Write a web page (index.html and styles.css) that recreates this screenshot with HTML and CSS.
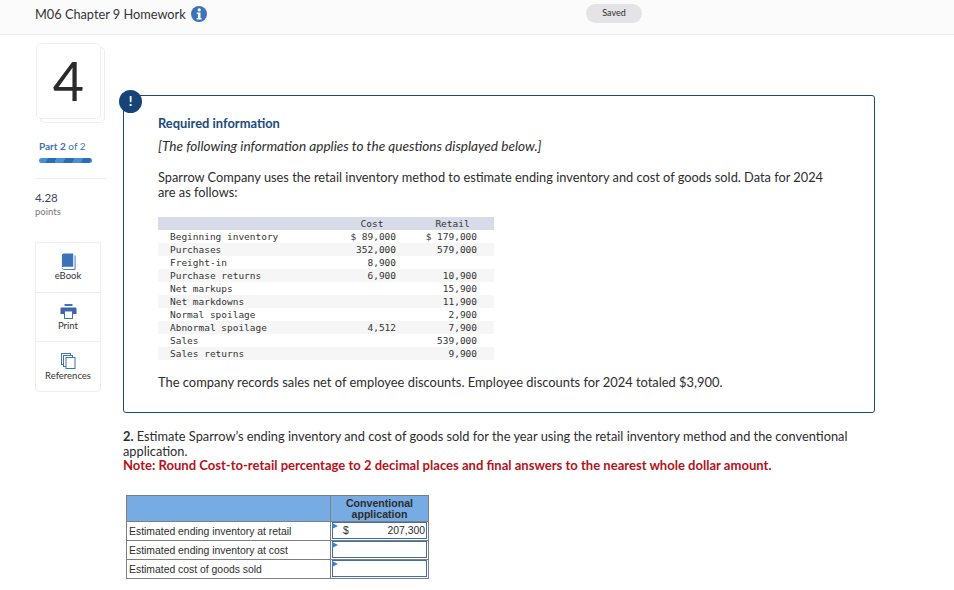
FILE: index.html
```html
<!DOCTYPE html>
<html lang="en">
<head>
<meta charset="utf-8">
<title>M06 Chapter 9 Homework</title>
<link rel="stylesheet" href="styles.css">
</head>
<body>
<header class="topbar">
  <div class="title"><span>M06 Chapter 9 Homework</span>
    <svg class="info" viewBox="0 0 16 16" width="16" height="16"><circle cx="8" cy="8" r="8" fill="#3b73b9"/><circle cx="8.200" cy="3.900" r="1.600" fill="#fff"/><path d="M5.800 6.400h3.700v5.600h1.100v1.600H5.700V12h1.200V8H5.800z" fill="#fff"/></svg>
  </div>
  <div class="saved">Saved</div>
</header>
<main class="layout">
  <aside class="side">
    <div class="qcard"><div class="qnum">4</div></div>
    <div class="part"><b>Part 2</b> of 2</div>
    <div class="progress"></div>
    <div class="rule"></div>
    <div class="score">4.28</div>
    <div class="pts">points</div>
    <div class="tools">
      <div class="tool">
        <svg viewBox="0 0 16 18" width="15" height="17"><path d="M1 2.500A2 2 0 0 1 3 .5h10v14H3a2 2 0 0 0-2 1.500z" fill="#3b73b9"/><path d="M1.500 16c0 .9.8 1.500 1.600 1.500H15V2.500" fill="none" stroke="#3b73b9"/></svg>
        <span>eBook</span>
      </div>
      <div class="tool">
        <svg viewBox="0 0 17 15" width="17" height="15"><rect x="4.500" y="0" width="8" height="2" fill="#3b73b9"/><path d="M1.500 3.500h14a1 1 0 0 1 1 1V10h-16V4.500a1 1 0 0 1 1-1z" fill="#3f62a8"/><rect x="4.500" y="7" width="8" height="7.500" fill="#fff" stroke="#3b73b9"/></svg>
        <span>Print</span>
      </div>
      <div class="tool">
        <svg viewBox="0 0 15 16" width="15" height="16"><g fill="#fff" stroke="#3b73b9"><rect x=".5" y=".5" width="9" height="11"/><rect x="2.500" y="2.500" width="9" height="11"/><rect x="5" y="4.500" width="9" height="11"/></g></svg>
        <span>References</span>
      </div>
    </div>
  </aside>
  <section class="content">
    <div class="callout">
      <div class="badge">!</div>
      <h2 class="req">Required information</h2>
      <p class="note">[The following information applies to the questions displayed below.]</p>
      <p class="intro">Sparrow Company uses the retail inventory method to estimate ending inventory and cost of goods sold. Data for 2024 are as follows:</p>
      <table class="data">
        <tr class="hd"><td></td><td class="c">Cost</td><td class="c">Retail</td></tr>
        <tr><td>Beginning inventory</td><td class="n">$ 89,000</td><td class="n">$ 179,000</td></tr>
        <tr class="alt"><td>Purchases</td><td class="n">352,000</td><td class="n">579,000</td></tr>
        <tr><td>Freight-in</td><td class="n">8,900</td><td class="n"></td></tr>
        <tr class="alt"><td>Purchase returns</td><td class="n">6,900</td><td class="n">10,900</td></tr>
        <tr><td>Net markups</td><td class="n"></td><td class="n">15,900</td></tr>
        <tr class="alt"><td>Net markdowns</td><td class="n"></td><td class="n">11,900</td></tr>
        <tr><td>Normal spoilage</td><td class="n"></td><td class="n">2,900</td></tr>
        <tr class="alt"><td>Abnormal spoilage</td><td class="n">4,512</td><td class="n">7,900</td></tr>
        <tr><td>Sales</td><td class="n"></td><td class="n">539,000</td></tr>
        <tr class="alt"><td>Sales returns</td><td class="n"></td><td class="n">9,900</td></tr>
      </table>
      <p class="after">The company records sales net of employee discounts. Employee discounts for 2024 totaled $3,900.</p>
    </div>
    <p class="question"><b>2.</b> Estimate Sparrow’s ending inventory and cost of goods sold for the year using the retail inventory method and the conventional application.<br><b class="red">Note: Round Cost-to-retail percentage to 2 decimal places and final answers to the nearest whole dollar amount.</b></p>
    <table class="answer">
      <tr class="ah"><th></th><th>Conventional<br>application</th></tr>
      <tr><td class="lbl">Estimated ending inventory at retail</td><td class="cell"><div class="inp"><span>$</span><span>207,300</span></div></td></tr>
      <tr><td class="lbl">Estimated ending inventory at cost</td><td class="cell"><div class="inp"></div></td></tr>
      <tr><td class="lbl">Estimated cost of goods sold</td><td class="cell"><div class="inp"></div></td></tr>
    </table>
  </section>
</main>
</body>
</html>
```
FILE: styles.css
```css
* { box-sizing: border-box; }
html, body { margin: 0; padding: 0; }
body {
  width: 954px;
  height: 590px;
  overflow: hidden;
  background: #fff;
  color: #2d2d2d;
  font-family: "Lato", "Liberation Sans", sans-serif;
}
.topbar {
  height: 35px;
  background: #fbfbfb;
  border-bottom: 1px solid #eee;
  display: flex;
  align-items: center;
  padding-left: 35px;
}
.title { width: 551px; margin-top: -7px; display: flex; align-items: center; gap: 5px; font-size: 12.750px; color: #333; }
.saved {
  width: 56px;
  height: 19px;
  margin-top: -7px;
  border-radius: 10px;
  background: #e4e3e5;
  font-size: 9px;
  line-height: 18px;
  text-align: center;
}
.layout { display: flex; }
.side { width: 123px; flex: none; padding: 8px 0 0 36px; }
.qcard {
  width: 65px;
  height: 76px;
  border: 1px solid #eee;
  border-radius: 5px;
  box-shadow: 4px 4px 0 -1px #fff, 4px 4px 0 0 #eee;
  display: flex;
  align-items: center;
  justify-content: center;
}
.qnum { font-size: 54px; line-height: 1; color: #2b2b2b; }
.part { margin: 21px 0 0 3px; font-size: 10px; line-height: 12px; color: #3b73b9; }
.part b { font-weight: 700; }
.progress {
  width: 53px;
  height: 5px;
  margin: 6px 0 0 3px;
  border-radius: 3px;
  background: repeating-linear-gradient(115deg, #4a90d9 0 8px, #2a6fb5 8px 16px);
}
.rule { width: 72px; height: 1px; margin: 15px 0 0 -1px; background: #eee; }
.score { margin: 12px 0 0 -1px; font-size: 11.500px; line-height: 14px; color: #3a4a5e; }
.pts { font-size: 9.500px; line-height: 13px; color: #777; margin-left: -1px; }
.tools {
  width: 66px;
  margin: 24px 0 0 -1px;
  border: 1px solid #eee;
  border-radius: 0 0 4px 4px;
}
.tool {
  height: 49px;
  display: flex;
  flex-direction: column;
  align-items: center;
  padding-top: 10px;
  font-size: 9.500px;
  line-height: 12px;
  color: #333;
}
.tool + .tool { border-top: 1px solid #eee; padding-top: 11px; }
.tool:last-child { height: 50px; }
.tool svg { display: block; }
.tool + .tool svg { margin-bottom: 1px; }
.content { width: 752px; padding-top: 60px; }
.callout {
  position: relative;
  height: 318px;
  border: 1.500px solid #1b4a80;
  border-radius: 3px;
  padding: 20px 34px 0;
}
.badge {
  position: absolute;
  left: -5px;
  top: -6px;
  width: 23px;
  height: 23px;
  border-radius: 50%;
  background: #164479;
  color: #fff;
  font-size: 13px;
  font-weight: 700;
  line-height: 22px;
  text-align: center;
}
.req { margin: 0; font-size: 12.900px; line-height: 14px; font-weight: 700; color: #1b4a80; }
.note { margin: 9px 0 0; font-size: 13.600px; line-height: 15px; font-style: italic; }
.intro { margin: 16px 0 0; width: 680px; font-size: 12.800px; line-height: 15px; }
.data {
  margin: 17px 0 0 0;
  width: 336px;
  border-collapse: collapse;
  table-layout: fixed;
  font-family: "DejaVu Sans Mono", monospace;
  font-size: 9.470px;
  color: #333;
}
.data td { height: 13px; padding: 0; line-height: 13px; white-space: pre; }
.data td:first-child { width: 175px; padding-left: 12px; }
.data td:nth-child(2) { width: 78px; }
.data .hd { background: #d8dce8; }
.data .alt { background: #f6f6f6; }
.data .c { text-align: center; }
.data td.n { text-align: right; padding-right: 15px; }
.data td.n:last-child { padding-right: 17px; }
.after { margin: 15px 0 0; font-size: 12.900px; line-height: 15px; }
.question { margin: 16px 0 0; width: 740px; font-size: 12.800px; line-height: 14.500px; }
.red { color: #b5121b; font-size: 13.050px; }
.answer {
  margin: 22px 0 0 3px;
  width: 303px;
  border-collapse: collapse;
  table-layout: fixed;
  font-family: "Liberation Sans", sans-serif;
  font-size: 10.400px;
}
.answer th, .answer td { border: 1.500px solid #7f7f7f; padding: 0; }
.ah th { background: #77abe3; height: 26px; padding-top: 2px; font-size: 10.600px; line-height: 11px; text-align: center; color: #2d2d2d; }
.ah th:first-child { width: 204px; }
.lbl { height: 19px; padding: 1px 0 0 2px !important; }
.cell { position: relative; }
.cell::before {
  content: "";
  position: absolute;
  left: 1px;
  top: 1px;
  border-left: 6px solid #3b80d0;
  border-top: 3px solid transparent;
  border-bottom: 3px solid transparent;
}
.inp {
  height: 17px;
  margin: 0 1px;
  border: 1px solid #3f6ea8;
  display: flex;
  justify-content: space-between;
  align-items: center;
  padding: 0 1px 0 10px;
}
```
